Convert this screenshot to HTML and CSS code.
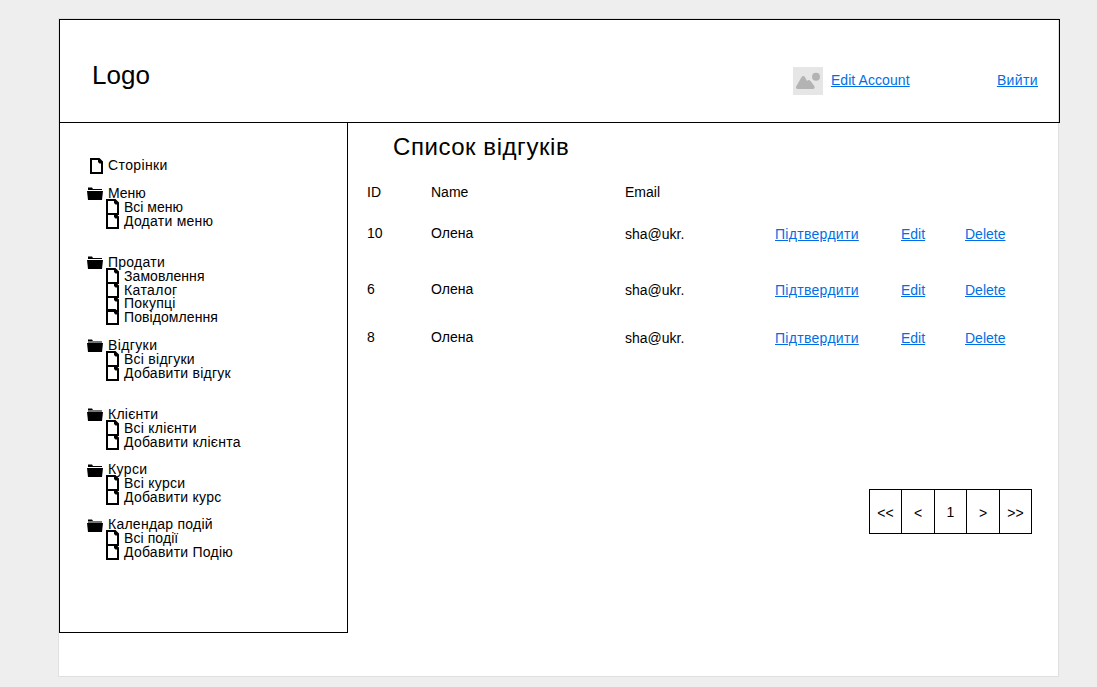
FILE: index.html
```
<!DOCTYPE html>
<html lang="uk">
<head>
<meta charset="utf-8">
<title>Список відгуків</title>
<link rel="stylesheet" href="styles.css">
</head>
<body>
<svg class="defs" width="0" height="0">
  <symbol id="file" viewBox="0 0 13 16"><path fill-rule="evenodd" d="M0 0H9.500L13 3.500V16H0ZM2 2V14H11V5.500H9.500L8 4V2Z"/></symbol>
  <symbol id="folder" viewBox="0 0 16 13"><path d="M1 0.5H5L6 2H15V3H1Z"/><path d="M0 4H16L15 13H1Z"/></symbol>
  <symbol id="folder-shaded" viewBox="0 0 16 13"><path d="M1 0.5H5L6 2H1Z"/><path fill="#777" d="M1 2H15V4H1Z"/><path d="M0 4H16L15 13H1Z"/></symbol>
</svg>
<div class="page">
  <header class="header">
    <div class="logo">Logo</div>
    <nav class="account">
      <svg class="avatar" viewBox="0 0 30 28"><rect width="30" height="28" fill="#e6e6e6"/><circle cx="23" cy="9.7" r="4" fill="#b3b3b3"/><path fill="#b3b3b3" d="M3.2 19.5L8.3 10.5Q10.2 7.6 12.2 10.5L14 14Q16 11.700 18 14.500L21.400 19.300Q22.300 22 20 22H5Q2.300 22 3.200 19.500Z"/></svg>
      <a class="link edit-account" href="#">Edit Account</a>
      <a class="link wider" href="#">Вийти</a>
    </nav>
  </header>
  <div class="body">
    <aside class="sidebar">
      <div class="item page-item"><svg class="file"><use href="#file"/></svg><span class="wider">Сторінки</span></div>
      <section class="group">
        <div class="item"><svg class="folder"><use href="#folder"/></svg><span>Меню</span></div>
        <div class="item child"><svg class="file"><use href="#file"/></svg><span>Всі меню</span></div>
        <div class="item child"><svg class="file"><use href="#file"/></svg><span class="wide">Додати меню</span></div>
      </section>
      <section class="group spaced">
        <div class="item"><svg class="folder"><use href="#folder"/></svg><span class="wide">Продати</span></div>
        <div class="item child"><svg class="file"><use href="#file"/></svg><span class="slight">Замовлення</span></div>
        <div class="item child"><svg class="file"><use href="#file"/></svg><span class="wider">Каталог</span></div>
        <div class="item child"><svg class="file"><use href="#file"/></svg><span class="wide">Покупці</span></div>
        <div class="item child"><svg class="file"><use href="#file"/></svg><span class="slight">Повідомлення</span></div>
      </section>
      <section class="group">
        <div class="item"><svg class="folder"><use href="#folder-shaded"/></svg><span class="wider">Відгуки</span></div>
        <div class="item child"><svg class="file"><use href="#file"/></svg><span class="wide">Всі відгуки</span></div>
        <div class="item child"><svg class="file"><use href="#file"/></svg><span class="wide">Добавити відгук</span></div>
      </section>
      <section class="group spaced">
        <div class="item"><svg class="folder"><use href="#folder-shaded"/></svg><span class="wide">Клієнти</span></div>
        <div class="item child"><svg class="file"><use href="#file"/></svg><span class="wide">Всі клієнти</span></div>
        <div class="item child"><svg class="file"><use href="#file"/></svg><span class="wide">Добавити клієнта</span></div>
      </section>
      <section class="group">
        <div class="item"><svg class="folder"><use href="#folder"/></svg><span class="wider">Курси</span></div>
        <div class="item child"><svg class="file"><use href="#file"/></svg><span class="wide">Всі курси</span></div>
        <div class="item child"><svg class="file"><use href="#file"/></svg><span class="wide">Добавити курс</span></div>
      </section>
      <section class="group">
        <div class="item"><svg class="folder"><use href="#folder-shaded"/></svg><span class="wide">Календар подій</span></div>
        <div class="item child"><svg class="file"><use href="#file"/></svg><span class="slight">Всі події</span></div>
        <div class="item child"><svg class="file"><use href="#file"/></svg><span class="wide">Добавити Подію</span></div>
      </section>
    </aside>
    <main class="main">
      <h1 class="title">Список відгуків</h1>
      <div class="table">
        <div class="row head"><span>ID</span><span>Name</span><span>Email</span></div>
        <div class="row tall"><span>10</span><span>Олена</span><span class="low">sha@ukr.</span><a class="link low confirm" href="#">Підтвердити</a><a class="link low" href="#">Edit</a><a class="link low" href="#">Delete</a></div>
        <div class="row"><span>6</span><span>Олена</span><span class="low">sha@ukr.</span><a class="link low confirm" href="#">Підтвердити</a><a class="link low" href="#">Edit</a><a class="link low" href="#">Delete</a></div>
        <div class="row"><span>8</span><span>Олена</span><span class="low">sha@ukr.</span><a class="link low confirm" href="#">Підтвердити</a><a class="link low" href="#">Edit</a><a class="link low" href="#">Delete</a></div>
      </div>
      <nav class="pager"><span class="arrow">&lt;&lt;</span><span class="arrow">&lt;</span><span>1</span><span class="arrow">&gt;</span><span class="arrow">&gt;&gt;</span></nav>
    </main>
  </div>
</div>
</body>
</html>
```
FILE: styles.css
```
* { box-sizing: border-box; }
body {
  margin: 0;
  padding: 19px 0 0 59px;
  height: 687px;
  overflow: hidden;
  background: #eee;
  color: #000;
  font: 14px/16px "Liberation Sans", Arial, sans-serif;
}
.defs { display: none; }
.page {
  width: 999px;
  height: 657px;
  background: #fff;
  box-shadow: 0 0 0 1px #e0e0e0;
}
.header {
  display: flex;
  justify-content: space-between;
  width: 1001px;
  height: 104px;
  padding: 0 21px 0 32px;
  border: 1px solid #000;
}
.logo { padding-top: 40px; font-size: 26px; line-height: 30px; }
.account { display: flex; padding-top: 47px; }
.avatar { width: 30px; height: 28px; margin-right: 8px; }
.link { color: #006fe6; text-decoration: underline; }
.account .link { padding-top: 5px; }
.edit-account { width: 166px; letter-spacing: 0.08px; }
.slight { letter-spacing: 0.08px; }
.wide { letter-spacing: 0.25px; }
.wider { letter-spacing: 0.38px; }
.confirm { letter-spacing: 0.3px; }
.body { display: flex; }
.sidebar {
  width: 289px;
  height: 511px;
  margin-top: -1px;
  padding: 36.35px 0 0 27px;
  border: 1px solid #000;
}
.item {
  display: flex;
  align-items: center;
  height: 13.82px;
  line-height: 13.82px;
  white-space: nowrap;
}
.item svg { flex: none; overflow: visible; }
.file { width: 13px; height: 16px; margin: 0 5px 0 0; }
.child .file { margin-bottom: 1.6px; }
.folder { width: 16px; height: 13px; margin-right: 5px; }
.page-item { padding-left: 3px; }
.child { padding-left: 19px; }
.group { margin-top: 13.82px; }
.spaced { margin-top: 27.64px; }
.main { flex: 1; padding-left: 19px; }
.title {
  margin: 0 0 0 26px;
  padding-top: 10px;
  font-size: 24px;
  font-weight: normal;
  line-height: 28px;
  letter-spacing: 0.55px;
}
.table { padding-top: 23px; }
.row {
  display: grid;
  grid-template-columns: 64px 194px 150px 126px 64px 60px;
  height: 48px;
}
.row > * { justify-self: start; }
.row.head { height: 41px; }
.row.tall { height: 56px; }
.low { padding-top: 1px; }
.pager {
  display: grid;
  grid-template-columns: 31px 33px 32px 33px 32px;
  grid-template-rows: 43px;
  width: 163px;
  height: 45px;
  margin: 112px 0 0 502px;
  border: 1px solid #000;
  line-height: 45px;
  text-align: center;
}
.pager span { overflow: hidden; }
.pager span + span { border-left: 1px solid #000; }
.pager .arrow { line-height: 47px; }
```
